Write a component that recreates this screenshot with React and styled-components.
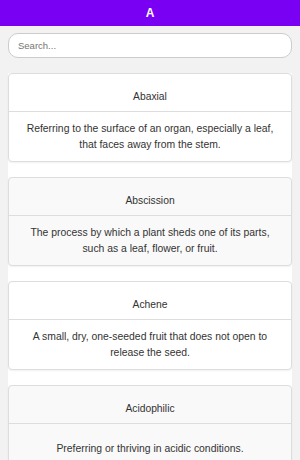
import React, { useState } from "react"
import styled, { createGlobalStyle } from "styled-components"

const terms = [
    ["Abaxial", "Referring to the surface of an organ, especially a leaf, that faces away from the stem."],
    ["Abscission", "The process by which a plant sheds one of its parts, such as a leaf, flower, or fruit."],
    ["Achene", "A small, dry, one-seeded fruit that does not open to release the seed."],
    ["Acidophilic", "Preferring or thriving in acidic conditions."],
    ["Acaulescent", "Having no visible stem, or a stem so short that the leaves appear to rise from the ground."],
    ["Accrescent", "Growing larger after flowering, as the calyx of some plants."],
    ["Acicular", "Slender and needle-shaped, like the leaves of pines."],
    ["Acropetal", "Developing from the base toward the apex."],
    ["Actinomorphic", "Radially symmetrical, able to be divided into equal halves along several planes."],
    ["Acuminate", "Tapering gradually to a long, narrow point."],
    ["Acute", "Ending in a sharp point with straight sides meeting at less than a right angle."],
    ["Adaxial", "Referring to the surface of an organ that faces toward the stem."],
    ["Adnate", "Fused to a different kind of organ, such as stamens joined to petals."],
    ["Adventitious", "Arising in an unusual place, such as roots growing from a stem."],
    ["Aerial root", "A root that grows above the ground, often used for support or climbing."],
    ["Aestivation", "The arrangement of the parts of a flower within the bud."],
    ["Aggregate fruit", "A fruit formed from several separate carpels of one flower."],
    ["Albumen", "The nutritive tissue that surrounds the embryo in a seed."],
    ["Allelopathy", "The release of chemicals by a plant that affect the growth of nearby plants."],
    ["Alternate", "Arranged singly at each node, on alternating sides of the stem."],
    ["Amplexicaul", "Clasping the stem with the base of the leaf."],
    ["Androecium", "The male parts of a flower, made up of all the stamens."],
    ["Anemophily", "Pollination carried out by the wind."],
    ["Angiosperm", "A flowering plant whose seeds are enclosed within an ovary."],
    ["Annual", "A plant that completes its life cycle in a single growing season."],
    ["Annular", "Shaped like a ring or arranged in a circle."],
    ["Anther", "The part of the stamen that produces and holds the pollen."],
    ["Anthesis", "The period during which a flower is fully open and functional."],
    ["Apetalous", "Lacking petals."],
    ["Apex", "The tip or highest point of an organ, such as a leaf or shoot."],
    ["Apical meristem", "The growing tissue at the tip of a root or shoot."],
    ["Apomixis", "Reproduction by seed without fertilization."],
    ["Appressed", "Lying flat or pressed closely against another surface."],
    ["Aquatic", "Growing in or living on water."],
    ["Arboreal", "Living in or relating to trees."],
    ["Arcuate", "Curved like a bow, as the veins of some leaves."],
    ["Areole", "A small area on a cactus from which spines or hairs grow."],
    ["Aril", "A fleshy covering that grows around some seeds."],
    ["Aristate", "Bearing a stiff, bristle-like tip."],
    ["Aromatic", "Having a strong, usually pleasant smell."],
    ["Articulate", "Jointed, or having nodes where parts separate."],
    ["Ascending", "Curving or growing upward from a spreading base."],
    ["Asexual reproduction", "Reproduction without the joining of gametes, such as by cuttings."],
    ["Asymmetrical", "Not able to be divided into equal halves."],
    ["Attenuate", "Gradually narrowing to a slender tip or base."],
    ["Auricle", "A small ear-shaped lobe at the base of a leaf."],
    ["Auriculate", "Bearing ear-shaped lobes at the base."],
    ["Autotroph", "An organism that makes its own food, as plants do by photosynthesis."],
    ["Auxin", "A plant hormone that controls growth and the bending of shoots toward light."],
    ["Awn", "A slender bristle at the tip of a grass floret or seed."],
    ["Axil", "The angle between the upper side of a leaf and the stem."],
    ["Axillary bud", "A bud that grows in the axil of a leaf."],
    ["Axis", "The main stem or central line of a plant or inflorescence."],
]

const App = () => {
    const [query, setQuery] = useState("")
    const shown = terms.filter(([t]) => t.toLowerCase().includes(query.toLowerCase()))

    return (
        <>
            <GlobalStyle />
            <Header>A</Header>
            <Main>
                <Search placeholder="Search..." value={query} onChange={(e) => setQuery(e.target.value)} />
                <List>
                    {shown.map(([term, def], i) => (
                        <Card key={term} $alt={i % 2 === 1}>
                            <Term>{term}</Term>
                            <Definition>{def}</Definition>
                        </Card>
                    ))}
                </List>
            </Main>
        </>
    )
}
export default App

const GlobalStyle = createGlobalStyle`
    html, body {
        margin: 0;
        padding: 0;
        background: #f2f2f2;
        font-family: "Liberation Sans", Arial, sans-serif;
        color: #333;
    }
    ::-webkit-scrollbar {
        width: 4px;
    }
    ::-webkit-scrollbar-track {
        background: #ececec;
        margin-top: 26px;
    }
    ::-webkit-scrollbar-thumb {
        background: #bdbdbd;
    }
`

const Header = styled.header`
    height: 26px;
    background-color: #7a00f4;
    color: white;
    font-weight: bold;
    font-size: 12px;
    display: flex;
    justify-content: center;
    align-items: center;
`

const Main = styled.main`
    padding: 7px 8px 8px;
    display: flex;
    flex-direction: column;
    gap: 15px;
`

const Search = styled.input`
    height: 25px;
    box-sizing: border-box;
    border: 1px solid #ccc;
    border-radius: 10px;
    padding: 0 9px;
    font-family: inherit;
    font-size: 9.5px;
    outline: none;
    background: white;

    ::placeholder {
        color: #8a8a8a;
    }
`

const List = styled.div`
    background: white;
    display: flex;
    flex-direction: column;
    gap: 15px;
`

const Card = styled.div`
    border: 1px solid #ddd;
    border-radius: 4px;
    background-color: ${(p) => (p.$alt ? "#f9f9f9" : "white")};
    box-shadow: 0 1px 2px rgba(0, 0, 0, 0.06);
    text-align: center;
`

const Term = styled.div`
    padding: 17px 10px 9px;
    font-size: 10.3px;
    line-height: 11px;
    border-bottom: 1px solid #ddd;
`

const Definition = styled.div`
    min-height: 49px;
    box-sizing: border-box;
    padding: 4px 14px;
    display: flex;
    align-items: center;
    justify-content: center;
    font-size: 10.4px;
    line-height: 16px;
`
